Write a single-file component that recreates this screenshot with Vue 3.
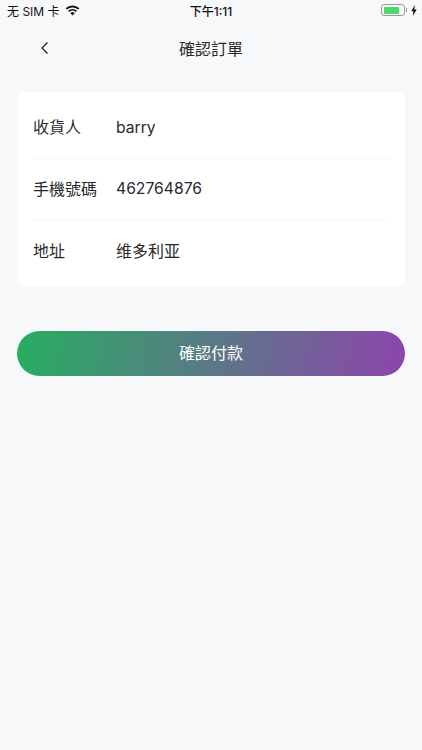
<template>
  <div class="page">
    <div class="status-bar">
      <div class="status-left">
        <span>无 SIM 卡</span>
        <svg class="wifi" width="15" height="11" viewBox="0 0 16 12">
          <path d="M8 11.5 5.6 8.9a3.5 3.5 0 0 1 4.8 0z" fill="#111" />
          <path d="M4.5 7.7 3.1 6.2a7.2 7.2 0 0 1 9.8 0l-1.4 1.5a5.2 5.2 0 0 0-7 0z" fill="#111" />
          <path d="M2 5 .5 3.5a10.9 10.9 0 0 1 15 0L14 5a8.8 8.8 0 0 0-12 0z" fill="#111" />
        </svg>
      </div>
      <div class="status-time">下午1:11</div>
      <div class="status-right">
        <div class="battery"><div class="battery-fill"></div></div>
        <div class="battery-cap"></div>
        <svg class="bolt" width="6" height="11" viewBox="0 0 6 11">
          <path d="M3.8 0 .3 6.2h2.2L1.9 11l3.8-6.5H3.4z" fill="#111" />
        </svg>
      </div>
    </div>

    <div class="nav-bar">
      <button class="back">
        <svg width="10" height="14" viewBox="0 0 10 14">
          <path d="M7.5 1.5 2 7l5.5 5.5" fill="none" stroke="#222" stroke-width="1.3" />
        </svg>
      </button>
      <div class="title">確認訂單</div>
    </div>

    <div class="card">
      <div class="row" v-for="row in rows" :key="row.label">
        <span class="label">{{ row.label }}</span>
        <span class="value" :class="{ latin: row.latin }">{{ row.value }}</span>
      </div>
    </div>

    <button class="pay">確認付款</button>
  </div>
</template>

<script setup>
const rows = [
  { label: '收貨人', value: 'barry', latin: true },
  { label: '手機號碼', value: '462764876', latin: true },
  { label: '地址', value: '维多利亚', latin: false },
]
</script>

<style>
body {
  margin: 0;
  background: #f7f8fa;
}
</style>

<style scoped>
.page {
  height: 750px;
  background: #f7f8fa;
  color: #2a2a2a;
  font-family: "Inter", "Noto Sans CJK TC", sans-serif;
  overflow: hidden;
}

.status-bar {
  height: 20px;
  display: flex;
  align-items: center;
  justify-content: space-between;
  padding: 0 5px 0 7px;
  position: relative;
  font-size: 12px;
  color: #111;
}

.status-left {
  display: flex;
  align-items: center;
  gap: 5px;
}

.status-time {
  position: absolute;
  left: 0;
  right: 0;
  text-align: center;
  font-weight: 500;
}

.status-right {
  display: flex;
  align-items: center;
}

.battery {
  width: 24px;
  height: 12px;
  box-sizing: border-box;
  border: 1px solid #9a9a9a;
  border-radius: 3px;
  padding: 1.5px;
}

.battery-fill {
  width: 15px;
  height: 100%;
  background: #4cd964;
  border-radius: 1px;
}

.battery-cap {
  width: 1px;
  height: 4px;
  background: #9a9a9a;
  margin-left: 1px;
}

.bolt {
  margin-left: 4px;
}

.nav-bar {
  height: 56px;
  display: flex;
  align-items: center;
  justify-content: center;
  position: relative;
}

.back {
  position: absolute;
  left: 40px;
  top: 21px;
  padding: 0;
  border: none;
  background: none;
  line-height: 0;
}

.title {
  font-size: 16px;
}

.card {
  margin: 16px 17px 0;
  padding: 5px 16px 0;
  height: 194px;
  box-sizing: border-box;
  background: #fff;
  border-radius: 6px;
  display: flex;
  flex-direction: column;
}

.row {
  height: 61.5px;
  box-sizing: border-box;
  display: flex;
  align-items: center;
  font-size: 16px;
  line-height: 22px;
  border-bottom: 1px solid #f5f5f5;
}

.row:last-child {
  border-bottom: none;
}

.label {
  width: 83px;
  flex-shrink: 0;
}

.value.latin {
  font-size: 15.7px;
  padding-top: 1px;
}

.pay {
  display: block;
  width: 388px;
  height: 45px;
  margin: 45px 17px 0;
  padding: 0 0 4px;
  border: none;
  border-radius: 23px;
  background: linear-gradient(100deg, #27ae60, #8e44ad);
  color: #fff;
  font-family: inherit;
  font-size: 16px;
}
</style>
